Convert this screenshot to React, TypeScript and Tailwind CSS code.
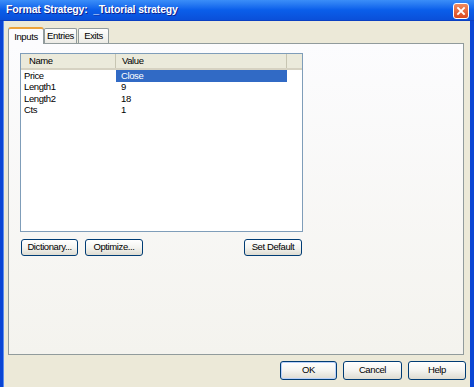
import React from 'react';

const rows = [
  { name: 'Price', value: 'Close' },
  { name: 'Length1', value: '9' },
  { name: 'Length2', value: '18' },
  { name: 'Cts', value: '1' },
];

const Btn = ({ label, className = '' }: { label: string; className?: string }) => (
  <div
    className={`flex items-center justify-center rounded-[3px] border border-[#003c74] bg-linear-to-b from-white via-[#f4f4f0] to-[#dedcd2] text-[9.5px] tracking-[-0.4px] text-black ${className}`}
  >
    {label}
  </div>
);

const App: React.FC = () => {
  return (
    <div className="flex h-[387px] w-[474px] flex-col overflow-hidden bg-[#0a45d4] font-['Liberation_Sans',Arial,sans-serif]">
      {/* Title bar */}
      <div className="flex h-[21px] shrink-0 items-center justify-between border-b border-[#0a3fc2] bg-linear-to-b from-[#3b8ef8] via-[#0a5eea] to-[#0a4fd9] pl-[6px] pr-[5px]">
        <span className="text-[10.5px] font-bold tracking-[-0.15px] text-white [text-shadow:1px_1px_#10238f]">
          Format Strategy:&nbsp; _Tutorial strategy
        </span>
        <div className="mt-[1px] flex h-[16px] w-[16px] items-center justify-center rounded-[3px] border border-white bg-linear-to-b from-[#f08a5e] to-[#d9461c]">
          <svg width="10" height="10" viewBox="0 0 10 10">
            <path d="M2 2 L8 8 M8 2 L2 8" stroke="white" strokeWidth="1.8" strokeLinecap="square" />
          </svg>
        </div>
      </div>

      {/* Client */}
      <div className="ml-[3px] mr-[4px] flex flex-1 flex-col border-l border-[#5a8cf0] bg-[#ece9d8] text-[9.5px] tracking-[-0.4px] text-black">
        {/* Tabs */}
        <div className="ml-[4px] mt-[6px] flex items-end">
          <div className="relative z-10 -mb-px flex h-[17px] w-[36px] items-start justify-center rounded-t-[3px] border border-b-0 border-[#919b9c] border-t-2 border-t-[#eda33a] bg-[#fcfcfe] pt-[1px]">
            Inputs
          </div>
          <div className="flex h-[15px] w-[33px] items-center justify-center rounded-t-[2px] border border-b-0 border-[#919b9c] bg-linear-to-b from-white to-[#ecebe5]">
            Entries
          </div>
          <div className="ml-[1px] flex h-[15px] w-[31px] items-center justify-center rounded-t-[2px] border border-b-0 border-[#919b9c] bg-linear-to-b from-white to-[#ecebe5]">
            Exits
          </div>
        </div>

        {/* Tab panel */}
        <div className="ml-[4px] flex h-[312px] w-[456px] flex-col border border-[#919b9c] bg-linear-to-b from-[#fcfcfe] to-[#f4f3ee] pl-[11px] pt-[9px]">
          <div className="flex h-[179px] w-[283px] flex-col border border-[#7f9db9] bg-white">
            <div className="flex h-[16px] shrink-0 border-b-2 border-[#d6d2c2] bg-[#ebeadb]">
              <div className="flex w-[95px] items-center border-r border-[#c7c5b2] pl-[8px]">Name</div>
              <div className="flex w-[171px] items-center border-r border-[#c7c5b2] pl-[6px]">Value</div>
              <div className="flex-1" />
            </div>
            {rows.map((r, i) => (
              <div key={r.name} className="flex h-[11.5px] items-center">
                <div className="w-[95px] pl-[3px]">{r.name}</div>
                <div
                  className={`flex h-full w-[171px] items-center pl-[5px] ${
                    i === 0 ? 'bg-[#316ac5] text-white' : ''
                  }`}
                >
                  {r.value}
                </div>
              </div>
            ))}
          </div>

          <div className="mt-[7px] flex w-[283px] items-center justify-between pl-[1px] pr-[1px]">
            <div className="flex gap-[7px]">
              <Btn label="Dictionary..." className="h-[17px] w-[57px]" />
              <Btn label="Optimize..." className="h-[17px] w-[58px]" />
            </div>
            <Btn label="Set Default" className="h-[17px] w-[58px]" />
          </div>
        </div>

        {/* Dialog buttons */}
        <div className="mr-[4px] mt-[6px] flex justify-end gap-[6px]">
          <Btn label="OK" className="h-[19px] w-[57px] shadow-[inset_0_0_0_1px_#b9d1fa]" />
          <Btn label="Cancel" className="h-[19px] w-[59px]" />
          <Btn label="Help" className="h-[19px] w-[58px]" />
        </div>
      </div>
    </div>
  );
};

export default App;
